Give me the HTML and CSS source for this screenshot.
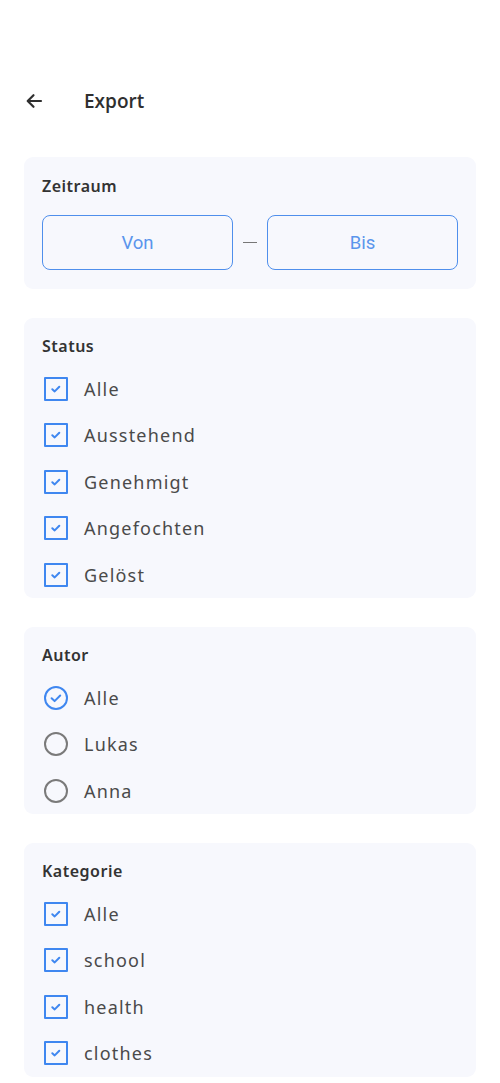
FILE: index.html
```html
<!DOCTYPE html>
<html lang="de">
<head>
    <meta charset="UTF-8">
    <meta name="viewport" content="width=device-width, initial-scale=1.0">
    <title>Export</title>
    <link rel="stylesheet" href="styles.css">
</head>
<body>
    <div class="page">
        <div class="header">
            <svg class="back" width="18" height="16" viewBox="0 0 18 16">
                <path d="M16 8H3M8.5 2.2L2.7 8l5.8 5.8" fill="none" stroke="#2f2f2f" stroke-width="2.2" stroke-linecap="round" stroke-linejoin="round"/>
            </svg>
            <div class="title">Export</div>
        </div>

        <div class="card">
            <div class="card-title">Zeitraum</div>
            <div class="range">
                <button class="range-button">Von</button>
                <div class="dash"></div>
                <button class="range-button">Bis</button>
            </div>
        </div>

        <div class="card list">
            <div class="card-title">Status</div>
            <div class="row"><span class="box"></span><span class="label">Alle</span></div>
            <div class="row"><span class="box"></span><span class="label">Ausstehend</span></div>
            <div class="row"><span class="box"></span><span class="label">Genehmigt</span></div>
            <div class="row"><span class="box"></span><span class="label">Angefochten</span></div>
            <div class="row"><span class="box"></span><span class="label">Gelöst</span></div>
        </div>

        <div class="card list">
            <div class="card-title">Autor</div>
            <div class="row"><span class="radio checked"></span><span class="label">Alle</span></div>
            <div class="row"><span class="radio"></span><span class="label">Lukas</span></div>
            <div class="row"><span class="radio"></span><span class="label">Anna</span></div>
        </div>

        <div class="card list">
            <div class="card-title">Kategorie</div>
            <div class="row"><span class="box"></span><span class="label">Alle</span></div>
            <div class="row"><span class="box"></span><span class="label">school</span></div>
            <div class="row"><span class="box"></span><span class="label">health</span></div>
            <div class="row"><span class="box"></span><span class="label">clothes</span></div>
        </div>
    </div>
</body>
</html>
```

FILE: styles.css
```css
body {
    margin: 0;
    background-color: #FFFFFF;
    font-family: 'Noto Sans', 'Open Sans', sans-serif;
    color: #3a3a3a;
}
.page {
    padding: 73px 24px 0 24px;
}
.header {
    display: flex;
    align-items: center;
    height: 56px;
    margin-bottom: 28px;
}
.back {
    margin-left: 1px;
    margin-right: 41px;
}
.title {
    font-family: 'Open Sans', sans-serif;
    font-size: 19px;
    font-weight: 600;
    color: #2f2f2f;
}
.card {
    background-color: #F7F8FD;
    border-radius: 9px;
    padding: 18px 18px 19px 18px;
    margin-bottom: 29px;
}
.card.list {
    padding: 17px 18px 0 18px;
}
.card-title {
    font-size: 16px;
    font-weight: 600;
    letter-spacing: 0.5px;
    line-height: 22px;
    color: #333333;
}
.list .card-title {
    margin-bottom: 8.5px;
}
.range {
    display: flex;
    align-items: center;
    margin-top: 18px;
}
.range-button {
    flex: 1;
    height: 55px;
    border: 1.5px solid #4F8FEC;
    border-radius: 8px;
    background-color: transparent;
    color: #5A95EC;
    font-family: 'Roboto', sans-serif;
    font-size: 18.5px;
    font-weight: 400;
}
.dash {
    width: 14px;
    height: 1.5px;
    margin: 0 10px;
    background-color: #777777;
}
.row {
    display: flex;
    align-items: center;
    height: 46.5px;
}
.label {
    font-size: 18px;
    letter-spacing: 1.2px;
    color: #4a4a4a;
    margin-left: 16px;
}
.box {
    width: 20px;
    height: 20px;
    margin-left: 2px;
    border: 2px solid #3F87F0;
    border-radius: 1px;
    background: url("data:image/svg+xml;utf8,<svg xmlns='http://www.w3.org/2000/svg' viewBox='0 0 20 20'><path d='M6.3 10.2l2.4 2.2 4.6-4.6' fill='none' stroke='%233F87F0' stroke-width='2' stroke-linecap='round' stroke-linejoin='round'/></svg>") center / 20px 20px no-repeat;
}
.radio {
    width: 20px;
    height: 20px;
    margin-left: 2px;
    border: 2px solid #7A7A7A;
    border-radius: 50%;
}
.radio.checked {
    border-color: #3F87F0;
    background: url("data:image/svg+xml;utf8,<svg xmlns='http://www.w3.org/2000/svg' viewBox='0 0 20 20'><path d='M5.6 10.3l3 2.8 5.6-5.6' fill='none' stroke='%233F87F0' stroke-width='2' stroke-linecap='round' stroke-linejoin='round'/></svg>") center / 20px 20px no-repeat;
}
```
